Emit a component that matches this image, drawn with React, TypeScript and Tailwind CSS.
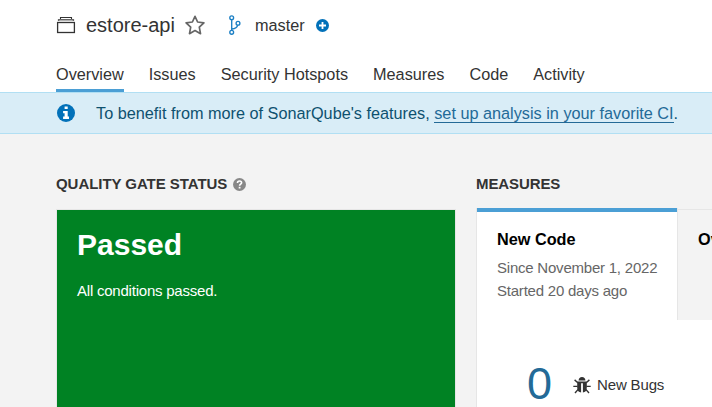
import React from "react";

const tabs = ["Overview", "Issues", "Security Hotspots", "Measures", "Code", "Activity"];

function ProjectIcon() {
  return (
    <svg className="block h-5 w-5 shrink-0" viewBox="0 0 20 20" fill="none" stroke="#333">
      <path d="M4.5 4V2.5h11V4" strokeWidth="1.1" />
      <path d="M2.6 6V4.7h14.8V6" stroke="#666" strokeWidth="1.4" />
      <rect x="1.6" y="7.5" width="16.8" height="10" strokeWidth="1.3" />
    </svg>
  );
}

function StarIcon() {
  return (
    <svg className="block h-5 w-5 shrink-0" viewBox="0 0 20 20" fill="none" stroke="#666" strokeWidth="1.7" strokeLinejoin="round">
      <path d="M10 1.3 12.6 7 18.9 7.8 14.3 12.2 15.5 18.7 10 15.6 4.5 18.7 5.7 12.2 1.1 7.8 7.4 7Z" />
    </svg>
  );
}

function BranchIcon() {
  return (
    <svg className="block h-5 w-5 shrink-0" viewBox="0 0 20 20" fill="none" stroke="#1b7fc4" strokeWidth="1.35">
      <circle cx="6.7" cy="2.7" r="1.9" />
      <circle cx="6.7" cy="17.3" r="1.9" />
      <circle cx="13" cy="8.2" r="1.9" />
      <path d="M6.7 4.6v10.8M6.9 14c3.8-.4 5.3-1.4 5.8-3.9" />
    </svg>
  );
}

function PlusIcon() {
  return (
    <svg className="block h-[13px] w-[13px] shrink-0" viewBox="0 0 13 13">
      <circle cx="6.5" cy="6.5" r="6.5" fill="#0271b9" />
      <path d="M6.5 3v7M3 6.5h7" stroke="#fff" strokeWidth="1.8" />
    </svg>
  );
}

function InfoIcon() {
  return (
    <svg className="block h-[18px] w-[18px] shrink-0" viewBox="0 0 18 18">
      <circle cx="9" cy="9" r="9" fill="#0271b9" />
      <path d="M7.6 2.5h3.1v2.6H7.6zM6.1 6.9h4.6v5.6H12v2.4H6.1v-2.4h1.5V9.2H6.1z" fill="#fff" />
    </svg>
  );
}

function HelpIcon() {
  return (
    <svg className="block h-[13px] w-[13px] shrink-0" viewBox="0 0 13 13">
      <circle cx="6.5" cy="6.5" r="6.5" fill="#888" />
      <path d="M4.5 5C4.5 3.6 5.3 3 6.5 3s2.1.7 2.1 1.8c0 1.3-2 1.5-2 3" fill="none" stroke="#fff" strokeWidth="1.6" />
      <path d="M5.7 8.8h1.8v1.7H5.7z" fill="#fff" />
    </svg>
  );
}

function BugIcon() {
  return (
    <svg className="block h-[18px] w-[18px] shrink-0" viewBox="0 0 18 18">
      <path d="M5.6 4.4C5.6 2.3 7 1 9 1s3.4 1.3 3.4 3.4z" fill="#333" />
      <path d="M4.2 5.4h9.6v6.3c0 3-1.6 4.5-3.9 4.8V7.2H8.1v9.3c-2.3-.3-3.9-1.8-3.9-4.8z" fill="#333" />
      <path d="M4.8 6.7 1.6 3.9M13.2 6.7l3.2-2.8M.3 10.4h4.3M13.4 10.4h4.3M5.2 13.4 2 17M12.8 13.4l3.2 3.6" stroke="#333" strokeWidth="1.4" />
    </svg>
  );
}

export default function App() {
  return (
    <div className="flex h-[407px] w-[712px] flex-col overflow-hidden whitespace-nowrap bg-[#f3f3f3] font-['Liberation_Sans',Arial,sans-serif] text-[#333]">
      <header className="flex h-[92px] shrink-0 flex-col justify-between bg-white pl-14">
        <div className="flex h-[50px] items-center">
          <ProjectIcon />
          <h1 className="ml-[10px] text-[20px]">estore-api</h1>
          <div className="ml-[10px]"><StarIcon /></div>
          <div className="ml-5"><BranchIcon /></div>
          <span className="ml-[10px] text-[16.25px]">master</span>
          <div className="ml-[11px]"><PlusIcon /></div>
        </div>
        <nav className="flex gap-[25px] text-[16.25px] leading-5">
          {tabs.map((tab) => (
            <a key={tab} className={`block h-7 border-b-[3px] ${tab === "Overview" ? "border-[#4b9fd5]" : "border-transparent"}`}>
              {tab}
            </a>
          ))}
        </nav>
      </header>
      <div className="flex h-[42px] shrink-0 items-center border-y border-[#b1dff3] bg-[#d9edf7] pl-[57px] text-[16.25px] text-[#0e516f]">
        <InfoIcon />
        <p className="ml-[21px] leading-5">
          To benefit from more of SonarQube's features,{" "}
          <a className="inline-block h-5 border-b border-[#236a97] leading-5 text-[#236a97]">set up analysis in your favorite CI</a>.
        </p>
      </div>
      <main className="flex flex-1 pl-14 pt-10">
        <section className="flex w-[400px] shrink-0 flex-col">
          <h2 className="flex h-5 items-center text-[15px] font-bold tracking-[-0.05px]">
            QUALITY GATE STATUS
            <span className="ml-[6px]"><HelpIcon /></span>
          </h2>
          <div className="mt-[15px] flex-1 border border-b-0 border-[#e6e6e6] bg-[#008223] pl-5 pt-[17px] text-white">
            <div className="text-[30px] font-bold leading-9">Passed</div>
            <p className="mt-[18px] text-[15px] leading-5 tracking-[-0.22px]">All conditions passed.</p>
          </div>
        </section>
        <section className="ml-5 flex flex-1 flex-col">
          <h2 className="h-5 text-[15px] font-bold leading-5 tracking-[-0.1px]">MEASURES</h2>
          <div className="mt-[14px] flex h-[112px] shrink-0">
            <div className="w-[202px] shrink-0 border-x border-[#e6e6e6] bg-white">
              <div className="h-1 bg-[#4b9fd5]" />
              <div className="pl-5 pt-[17px]">
                <h3 className="text-[16.25px] font-bold leading-5 text-black">New Code</h3>
                <p className="mt-[7px] text-[15px] leading-[23px] tracking-[-0.22px] text-[#666]">Since November 1, 2022<br />Started 20 days ago</p>
              </div>
            </div>
            <div className="mt-px flex-1 overflow-hidden border-t border-[#e6e6e6] pl-5 pt-[19px] text-[16.25px] font-bold leading-5 text-black">Overall Code</div>
          </div>
          <div className="flex h-[87px] items-start border-l border-[#e6e6e6] bg-white pl-[50px] pt-[41px]">
            <span className="text-[45px] leading-[46px] text-[#236a97]">0</span>
            <span className="ml-[21px] mt-[15px]"><BugIcon /></span>
            <span className="ml-[6px] mt-[14px] text-[15px] leading-5 tracking-[-0.15px]">New Bugs</span>
          </div>
        </section>
      </main>
    </div>
  );
}
